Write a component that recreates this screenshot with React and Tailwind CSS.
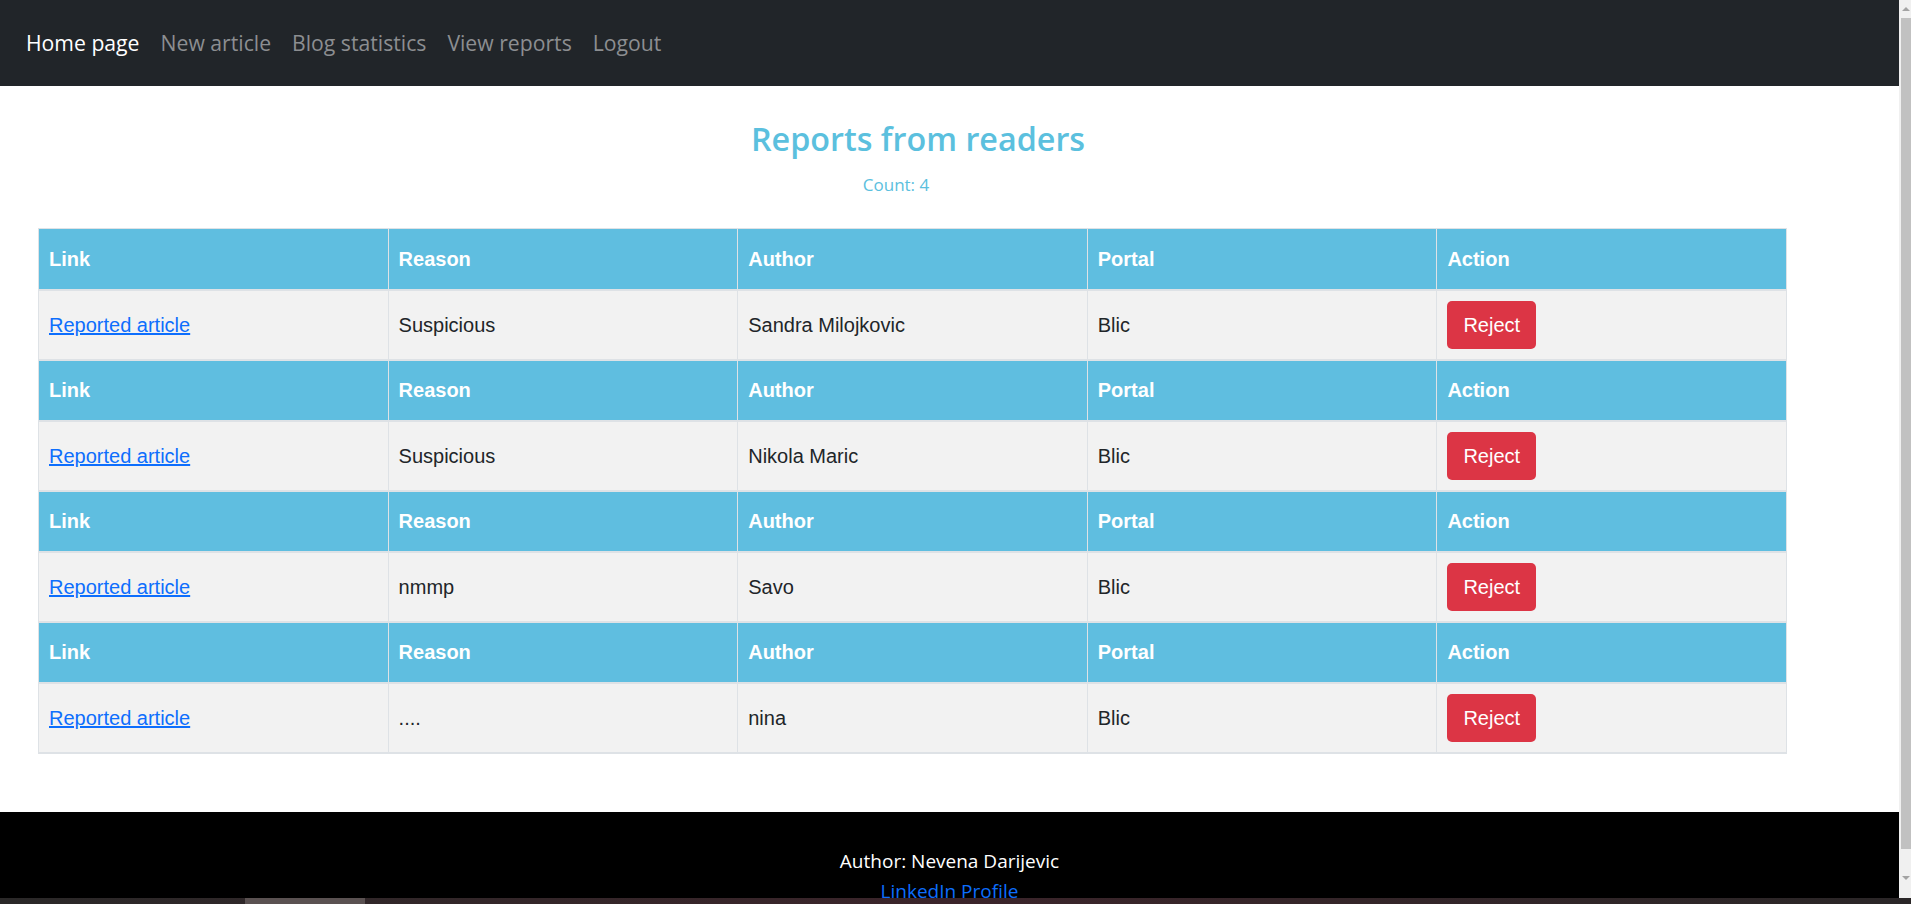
const reports = [
  { reason: "Suspicious", author: "Sandra Milojkovic", portal: "Blic" },
  { reason: "Suspicious", author: "Nikola Maric", portal: "Blic" },
  { reason: "nmmp", author: "Savo", portal: "Blic" },
  { reason: "....", author: "nina", portal: "Blic" },
];

const headers = ["Link", "Reason", "Author", "Portal", "Action"];

function NavBar() {
  return (
    <nav className="flex h-[86px] items-center bg-[#212529] pl-[26px] font-['Open_Sans',sans-serif] text-[21.2px]">
      <a className="pr-[21px] text-white">Home page</a>
      <a className="pr-[21px] text-[#8c8e91]">New article</a>
      <a className="pr-[21px] text-[#8c8e91]">Blog statistics</a>
      <a className="pr-[21px] text-[#8c8e91]">View reports</a>
      <a className="text-[#8c8e91]">Logout</a>
    </nav>
  );
}

function ReportGroup({ report }) {
  return (
    <>
      <tr className="h-[61px] border-b-2 border-[#dee2e6] bg-[#5fbee0]">
        {headers.map((h) => (
          <th
            key={h}
            className="border-x border-[#dee2e6] px-[10px] text-left font-bold text-white"
          >
            {h}
          </th>
        ))}
      </tr>
      <tr className="h-[70px] border-b-2 border-[#dee2e6] bg-[#f2f2f2] text-[#212529]">
        <td className="border-x border-[#dee2e6] px-[10px]">
          <a className="text-[#0d6efd] underline">Reported article</a>
        </td>
        <td className="border-x border-[#dee2e6] px-[10px]">{report.reason}</td>
        <td className="border-x border-[#dee2e6] px-[10px]">{report.author}</td>
        <td className="border-x border-[#dee2e6] px-[10px]">{report.portal}</td>
        <td className="border-x border-[#dee2e6] px-[10px]">
          <button className="h-[48px] rounded-[5px] bg-[#dc3545] px-[16px] text-white">
            Reject
          </button>
        </td>
      </tr>
    </>
  );
}

function Scrollbar() {
  return (
    <div className="flex w-[12px] flex-col bg-[#f0f0f0]">
      <div className="flex h-[18px] items-center justify-end pr-[1px]">
        <div className="h-0 w-0 border-x-[4px] border-b-[4px] border-x-transparent border-b-[#a3a3a3]" />
      </div>
      <div className="ml-[2px] h-[831px] bg-[#c1c1c1]" />
      <div className="flex flex-1 items-center justify-end pr-[1px] pt-[8px]">
        <div className="h-0 w-0 border-x-[4px] border-t-[4px] border-x-transparent border-t-[#a3a3a3]" />
      </div>
    </div>
  );
}

export default function App() {
  return (
    <div className="flex h-[904px] flex-col overflow-hidden bg-white">
      <div className="flex h-[898px]">
        <div className="flex-1 overflow-hidden">
          <NavBar />
          <main className="ml-[38px] w-[1749px] pb-[58px]">
            <h2 className="mt-[33px] pl-[11px] text-center font-['Open_Sans',sans-serif] text-[32.3px] font-semibold leading-[38px] text-[#5bc0de]">
              Reports from readers
            </h2>
            <p className="mt-[16px] pr-[33px] text-center font-['Open_Sans',sans-serif] text-[17px] leading-[24px] text-[#5bc0de]">
              Count: 4
            </p>
            <table className="mt-[31px] w-full table-fixed border-collapse border border-[#dee2e6] font-['Liberation_Sans',Arial,sans-serif] text-[20px]">
              <tbody>
                {reports.map((r, i) => (
                  <ReportGroup key={i} report={r} />
                ))}
              </tbody>
            </table>
          </main>
          <footer className="bg-black pt-[34px] text-center font-['Open_Sans',sans-serif] text-[19px] leading-[30px]">
            <p className="text-white">Author: Nevena Darijevic</p>
            <a className="text-[#0d6efd]">LinkedIn Profile</a>
          </footer>
        </div>
        <Scrollbar />
      </div>
      <div className="flex h-[6px] bg-linear-to-r from-[#2a2828] via-[#3b242a] to-[#2a2627]">
        <div className="w-[245px]" />
        <div className="w-[120px] bg-[#5a5151]" />
      </div>
    </div>
  );
}
